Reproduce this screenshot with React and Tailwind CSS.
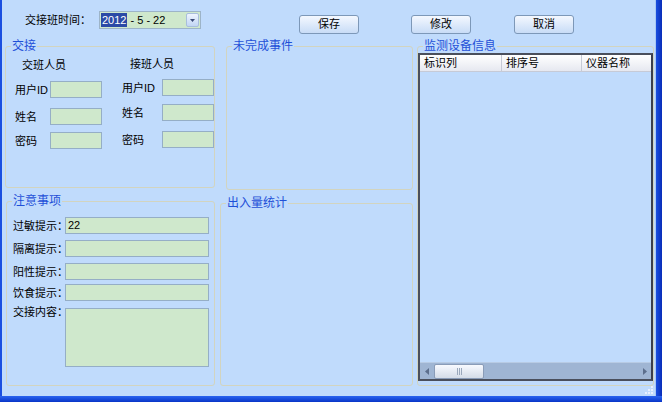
import React from 'react';

const font = { fontFamily: '"Liberation Sans", "Noto Sans CJK SC", sans-serif' };

function Group({ title, className = '', children }) {
    return (
        <fieldset className={`border border-[#d2d4bf] rounded-[3px] min-w-0 ${className}`}>
            <legend className="ml-[5px] px-[1px] text-[12px] leading-[14px] text-[#1f50d8]">{title}</legend>
            {children}
        </fieldset>
    );
}

function Field({ className = '', children }) {
    return (
        <div className={`bg-[#cfe8cc] border border-[#95aec6] text-[11px] leading-[15px] pl-[2px] ${className}`}>
            {children}
        </div>
    );
}

function Button({ children }) {
    return (
        <button className="w-[60px] h-[19px] rounded-[3px] border border-[#7d98b8] bg-gradient-to-b from-[#f4f8ff] to-[#c8dcf6] text-[11px] leading-[17px] text-black">
            {children}
        </button>
    );
}

const noticeRows = [
    { label: '过敏提示：', value: '22', mt: 'mt-[9px]' },
    { label: '隔离提示：', value: '', mt: 'mt-[6px]' },
    { label: '阳性提示：', value: '', mt: 'mt-[6px]' },
    { label: '饮食提示：', value: '', mt: 'mt-[4px]' }
];

export default function App() {
    return (
        <div className="w-[662px] h-[402px] flex flex-col bg-[#c0dbfc] text-black overflow-hidden" style={font}>
            <div className="flex flex-1 min-h-0">
                <div className="w-[2px] bg-[#1a4fe0]" />
                <div className="flex-1 flex flex-col relative">
                    {/* top bar */}
                    <div className="h-[39px] flex items-start pt-[11px]">
                        <span className="ml-[23px] w-[74px] text-[11px] leading-[18px] whitespace-nowrap">交接班时间：</span>
                        <div className="w-[102px] h-[18px] flex items-center bg-[#cfe8cc] border border-[#9db4c8] text-[11px]">
                            <span className="ml-[1px] bg-[#2c4aa6] text-white px-[1px] leading-[14px]">2012</span>
                            <span className="ml-[3px] whitespace-pre leading-[14px]">- 5 - 22</span>
                            <div className="ml-auto mr-[1px] w-[13px] h-[14px] rounded-[2px] border border-[#a8bedc] bg-gradient-to-b from-[#eef4ff] to-[#c2d6f4] flex items-center justify-center">
                                <svg width="5" height="3" viewBox="0 0 5 3"><path d="M0 0h5L2.5 3z" fill="#3a4a78" /></svg>
                            </div>
                        </div>
                        <div className="ml-[98px]"><Button>保存</Button></div>
                        <div className="ml-[52px]"><Button>修改</Button></div>
                        <div className="ml-[43px]"><Button>取消</Button></div>
                    </div>

                    <div className="flex flex-1 min-h-0">
                        {/* column 1 */}
                        <div className="ml-[3px] w-[210px] flex flex-col">
                            <Group title="交接" className="h-[149px]">
                                <div className="flex text-[11px] leading-[14px] whitespace-nowrap">
                                    <div className="ml-[9px] w-[98px]">
                                        <div className="mt-[5px] ml-[7px]">交班人员</div>
                                        <div className="mt-[9px] flex items-center h-[17px]">
                                            <span className="w-[35px]">用户ID</span>
                                            <Field className="w-[52px] h-[17px]" />
                                        </div>
                                        <div className="mt-[10px] flex items-center h-[17px]">
                                            <span className="w-[35px]">姓名</span>
                                            <Field className="w-[52px] h-[17px]" />
                                        </div>
                                        <div className="mt-[7px] flex items-center h-[17px]">
                                            <span className="w-[35px]">密码</span>
                                            <Field className="w-[52px] h-[17px]" />
                                        </div>
                                    </div>
                                    <div className="ml-[9px]">
                                        <div className="mt-[4px] ml-[8px]">接班人员</div>
                                        <div className="mt-[8px] flex items-center h-[17px]">
                                            <span className="w-[40px]">用户ID</span>
                                            <Field className="w-[52px] h-[17px]" />
                                        </div>
                                        <div className="mt-[8px] flex items-center h-[17px]">
                                            <span className="w-[40px]">姓名</span>
                                            <Field className="w-[52px] h-[17px]" />
                                        </div>
                                        <div className="mt-[10px] flex items-center h-[17px]">
                                            <span className="w-[40px]">密码</span>
                                            <Field className="w-[52px] h-[17px]" />
                                        </div>
                                    </div>
                                </div>
                            </Group>
                            <Group title="注意事项" className="mt-[6px] flex-1 mb-[10px] ml-[1px]">
                                <div className="text-[11px] leading-[14px] whitespace-nowrap">
                                    {noticeRows.map((row) => (
                                        <div key={row.label} className={`${row.mt} flex items-center h-[17px]`}>
                                            <span className="ml-[6px] w-[52px]">{row.label}</span>
                                            <Field className="w-[144px] h-[17px]">{row.value}</Field>
                                        </div>
                                    ))}
                                    <div className="mt-[7px] flex items-start">
                                        <span className="ml-[6px] w-[52px] mt-[-3px]">交接内容：</span>
                                        <Field className="w-[144px] h-[59px]" />
                                    </div>
                                </div>
                            </Group>
                        </div>

                        {/* column 2 */}
                        <div className="ml-[5px] w-[193px] flex flex-col">
                            <Group title="未完成事件" className="ml-[6px] h-[151px]" />
                            <Group title="出入量统计" className="mt-[6px] flex-1 mb-[10px]" />
                        </div>

                        {/* column 3 */}
                        <div className="ml-[4px] w-[237px] flex flex-col">
                            <Group title="监测设备信息" className="flex-1 mb-[10px] flex flex-col">
                                <div className="mb-[4px] flex-1 flex flex-col border-2 border-[#4a4f5c] border-r-[#3a3f4c] bg-[#c0dbfc]">
                                    <div className="flex h-[17px] text-[11px] leading-[16px] bg-gradient-to-b from-white to-[#e6e8f0] border-b border-[#c6cad6]">
                                        <div className="w-[82px] pl-[4px] border-r border-[#c6cad6]">标识列</div>
                                        <div className="w-[80px] pl-[4px] border-r border-[#c6cad6]">排序号</div>
                                        <div className="flex-1 pl-[4px]">仪器名称</div>
                                    </div>
                                    <div className="flex-1" />
                                    <div className="h-[17px] flex items-center bg-[#9fb5d3] border-t border-[#b8cbe4]">
                                        <svg className="ml-[5px]" width="4" height="7" viewBox="0 0 4 7"><path d="M4 0v7L0 3.5z" fill="#5c6e8c" /></svg>
                                        <div className="ml-[5px] w-[50px] h-[15px] rounded-[2px] border border-[#8a9cb8] bg-gradient-to-b from-[#f8faff] to-[#d4dce8] flex items-center justify-center gap-[1px]">
                                            <div className="w-[1px] h-[7px] bg-[#9aa8bc]" />
                                            <div className="w-[1px] h-[7px] bg-[#9aa8bc]" />
                                            <div className="w-[1px] h-[7px] bg-[#9aa8bc]" />
                                        </div>
                                        <svg className="ml-auto mr-[4px]" width="4" height="7" viewBox="0 0 4 7"><path d="M0 0v7L4 3.5z" fill="#5c6e8c" /></svg>
                                    </div>
                                </div>
                            </Group>
                        </div>
                    </div>

                    {/* resize grip */}
                    <svg className="absolute right-[1px] bottom-[1px]" width="9" height="9" viewBox="0 0 9 9">
                        <rect x="6" y="0" width="2" height="2" fill="#e8f0ff" />
                        <rect x="3" y="3" width="2" height="2" fill="#e8f0ff" />
                        <rect x="6" y="3" width="2" height="2" fill="#e8f0ff" />
                        <rect x="0" y="6" width="2" height="2" fill="#e8f0ff" />
                        <rect x="3" y="6" width="2" height="2" fill="#e8f0ff" />
                        <rect x="6" y="6" width="2" height="2" fill="#e8f0ff" />
                    </svg>
                </div>
                <div className="w-[1px] bg-[#a9c8f4]" />
                <div className="w-[6px] bg-gradient-to-r from-[#1a4fe0] to-[#0a2cb8]" />
            </div>
            <div className="h-[6px] bg-gradient-to-b from-[#2a64f0] to-[#0a34c8]" />
        </div>
    );
}
